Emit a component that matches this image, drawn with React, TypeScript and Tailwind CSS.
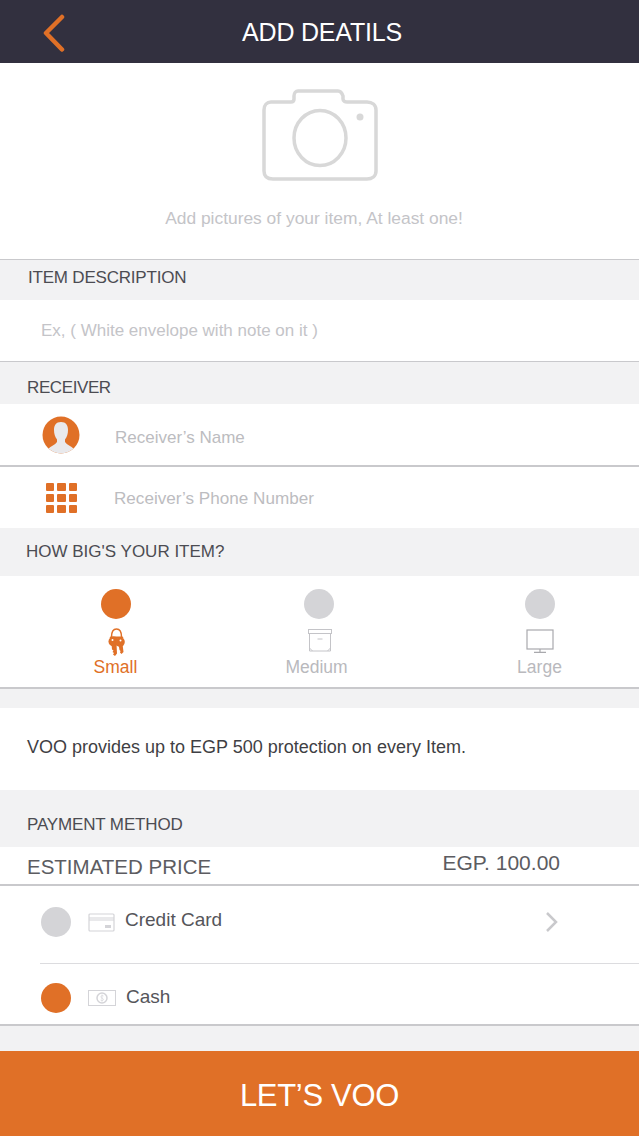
import React from 'react';

const font = { fontFamily: '"Liberation Sans", Arial, sans-serif' };

const SectionLabel = ({ text, className }: { text: string; className: string }) => (
  <div className={`flex items-center bg-[#f2f2f3] text-[17px] text-[#4c4c52] ${className}`}>{text}</div>
);

const Dot = ({ on, className = '' }: { on: boolean; className?: string }) => (
  <span className={`block h-[30px] w-[30px] shrink-0 rounded-full ${on ? 'bg-[#e07027]' : 'bg-[#d4d4d7]'} ${className}`} />
);

const CameraIcon = () => (
  <svg width="116" height="92" viewBox="0 0 116 92" fill="none" stroke="#d8d8d8" strokeWidth="3.5">
    <path d="M9 13H29C31 13 32 12 32 10V7C32 4 34 2 36 2H76C79 2 80 4 81 7V10C81 12 83 13 85 13H105C110 13 114 16 114 21V82C114 87 110 90 105 90H11C5 90 2 87 2 82V21C2 16 5 13 9 13Z" />
    <ellipse cx="58" cy="49" rx="26" ry="27.5" />
    <circle cx="98" cy="28" r="3.5" fill="#d8d8d8" stroke="none" />
  </svg>
);

const PersonIcon = () => (
  <svg width="38" height="38" viewBox="0 0 38 38">
    <defs>
      <clipPath id="avatar">
        <circle cx="19" cy="19" r="18.5" />
      </clipPath>
    </defs>
    <circle cx="19" cy="19" r="18.5" fill="#e07027" />
    <path
      clipPath="url(#avatar)"
      d="M19 6C14 6 12 9.500 12 14C12 18 13 21 15 23.500V26C13 29 9 30 6 33V38H32V33C29 30 25 29 23 26V23.500C25 21 26 18 26 14C26 9.500 24 6 19 6Z"
      fill="#e9e9ec"
    />
  </svg>
);

const KeypadIcon = () => (
  <div className="grid w-[31px] grid-cols-3 gap-[3px]">
    {Array.from({ length: 9 }).map((_, i) => (
      <span key={i} className="block h-[8px] rounded-[1px] bg-[#e07027]" />
    ))}
  </div>
);

const KeysIcon = () => (
  <svg width="17" height="28" viewBox="0 0 17 28" fill="#e07027">
    <path d="M3.500 9C3.500 4 5.500 1 8.500 1C11.500 1 13.500 4 13.500 9" fill="none" stroke="#e07027" strokeWidth="1.500" />
    <path d="M2.500 8.500H14.500L15.500 10H1.500Z" />
    <circle cx="5.500" cy="13.500" r="5" />
    <circle cx="12" cy="14" r="4.800" />
    <path d="M3.500 16H8.500L9 25.500L7 28L5 26.500L6 25L4.500 24L5.500 22.500L4 21.500Z" />
    <path d="M10.500 16H14.500L15.500 24L13.500 26L12 24.500L12.500 23L11.500 22Z" />
    <circle cx="4.500" cy="12" r="1" fill="#fff" />
    <circle cx="12.500" cy="12.500" r="1" fill="#fff" />
  </svg>
);

const BoxIcon = () => (
  <svg width="24" height="23" viewBox="0 0 24 23" fill="none" stroke="#c4c4c8" strokeWidth="1">
    <rect x="0.500" y="0.500" width="23" height="4" />
    <path d="M1.500 4.500V22H22.500V4.500" />
    <path d="M9.500 10H14.500" />
    <path d="M1.500 19L4.500 22M22.500 19L19.500 22" />
  </svg>
);

const MonitorIcon = () => (
  <svg width="28" height="24" viewBox="0 0 28 24" fill="none" stroke="#a9a9ad" strokeWidth="1.200">
    <rect x="1" y="1" width="26" height="19" />
    <path d="M14 20V23M8 23.400H20" />
  </svg>
);

const CardIcon = () => (
  <svg width="27" height="19" viewBox="0 0 27 19" fill="none" stroke="#d4d4d8" strokeWidth="1.200">
    <rect x="1" y="1" width="25" height="17" rx="1" />
    <path d="M1 5H26M1 7H26" />
    <rect x="17" y="12" width="6" height="3" fill="#d4d4d8" stroke="none" />
  </svg>
);

const CashIcon = () => (
  <svg width="28" height="16" viewBox="0 0 28 16" fill="none" stroke="#d4d4d8" strokeWidth="1">
    <rect x="0.500" y="0.500" width="27" height="15" />
    <circle cx="14" cy="8" r="5" strokeWidth="1.500" />
    <path d="M15.500 6C14 5 12.500 6 13 7.500C13.500 8.500 15.500 8 15.500 9.800C15 11 13 11 12.500 10M14 4.500V11.500" strokeWidth="0.700" />
  </svg>
);

const SizeOption = ({
  label,
  on,
  icon,
  className,
  dotClass,
  iconClass,
}: {
  label: string;
  on: boolean;
  icon: React.ReactNode;
  className: string;
  dotClass?: string;
  iconClass: string;
}) => (
  <div className={`flex flex-col items-center ${className}`}>
    <Dot on={on} className={dotClass} />
    <div className={`flex h-[37px] items-end ${iconClass}`}>{icon}</div>
    <span className={`mt-[1px] text-[17.5px] leading-[20px] ${on ? 'text-[#e07027]' : 'text-[#b9b9bd]'}`}>{label}</span>
  </div>
);

export default function App() {
  return (
    <div style={font} className="flex h-[1136px] w-[639px] flex-col overflow-hidden bg-white">
      <header className="relative flex h-[63px] shrink-0 items-center justify-center bg-[#32303f] pl-[5px] pt-[2px]">
        <svg className="absolute left-[42px] top-[14px]" width="24" height="38" viewBox="0 0 24 38" fill="none" stroke="#e07027" strokeWidth="4.500" strokeLinecap="round" strokeLinejoin="round">
          <path d="M20 3L4 19L20 35.500" />
        </svg>
        <h1 className="text-[25px] font-normal tracking-[-0.2px] text-white">ADD DEATILS</h1>
      </header>

      <section className="flex h-[197px] shrink-0 flex-col items-center border-b border-[#c9c9cc] pt-[26px]">
        <div className="ml-[1px]"><CameraIcon /></div>
        <p className="mr-[11px] mt-[27px] text-[17.4px] leading-[20px] text-[#c4c4c8]">Add pictures of your item, At least one!</p>
      </section>

      <SectionLabel text="ITEM DESCRIPTION" className="h-[40px] shrink-0 pb-[5px] pl-[28px] tracking-[-0.2px]" />
      <div className="flex h-[62px] shrink-0 items-center border-b border-[#c9c9cc] pl-[41px] text-[17px] text-[#c4c4c8]">
        Ex, ( White envelope with note on it )
      </div>

      <SectionLabel text="RECEIVER" className="h-[42px] shrink-0 pl-[27px] pt-[10px] tracking-[-0.4px]" />
      <div className="flex h-[63px] shrink-0 items-center border-b-2 border-[#c9c9cc] pl-[42px]">
        <PersonIcon />
        <span className="ml-[35px] mt-[7px] text-[17px] text-[#bcbcc0]">Receiver’s Name</span>
      </div>
      <div className="flex h-[61px] shrink-0 items-center pl-[46px]">
        <KeypadIcon />
        <span className="ml-[37px] mt-[2px] text-[17.1px] text-[#bcbcc0]">Receiver’s Phone Number</span>
      </div>

      <SectionLabel text="HOW BIG'S YOUR ITEM?" className="h-[48px] shrink-0 pl-[26px]" />
      <div className="h-[113px] shrink-0 border-b-2 border-[#c9c9cc] pt-[13px]">
        <div className="flex">
          <SizeOption label="Small" on icon={<KeysIcon />} className="ml-[74px] w-[83px]" iconClass="ml-[1px]" />
          <SizeOption label="Medium" on={false} icon={<BoxIcon />} className="ml-[118px] w-[83px]" dotClass="ml-[4px]" iconClass="ml-[7px] pb-[4px]" />
          <SizeOption label="Large" on={false} icon={<MonitorIcon />} className="ml-[140px] w-[83px]" iconClass="pb-[3px]" />
        </div>
      </div>

      <div className="h-[19px] shrink-0 bg-[#f2f2f3]" />
      <div className="flex h-[82px] shrink-0 items-center pb-[4px] pl-[27px] text-[18px] text-[#3f3f44]">
        VOO provides up to EGP 500 protection on every Item.
      </div>

      <SectionLabel text="PAYMENT METHOD" className="h-[57px] shrink-0 pl-[27px] pt-[12px] tracking-[-0.15px]" />
      <div className="flex h-[39px] shrink-0 justify-between border-b-2 border-[#c9c9cc] pl-[27px] pr-[79px] text-[#5c5c61]">
        <span className="mt-[6px] text-[20.5px] leading-[28px]">ESTIMATED PRICE</span>
        <span className="mt-[2px] text-[21px] leading-[28px]">EGP. 100.00</span>
      </div>

      <div className="flex h-[77px] shrink-0 items-center pb-[5px] pl-[41px]">
        <Dot on={false} />
        <span className="ml-[17px]"><CardIcon /></span>
        <span className="mb-[3px] ml-[10px] text-[19px] text-[#55555a]">Credit Card</span>
        <svg className="ml-[323px]" width="14" height="22" viewBox="0 0 14 22" fill="none" stroke="#c9c9cc" strokeWidth="2.500">
          <path d="M2 2L11 11L2 20" />
        </svg>
      </div>
      <div className="ml-[40px] h-px shrink-0 bg-[#dcdcdf]" />
      <div className="flex h-[62px] shrink-0 items-center border-b-2 border-[#c9c9cc] pl-[41px] pt-[7px]">
        <Dot on />
        <span className="ml-[17px]"><CashIcon /></span>
        <span className="ml-[10px] text-[19px] text-[#55555a]">Cash</span>
      </div>

      <div className="h-[25px] shrink-0 bg-[#f2f2f3]" />
      <button className="flex h-[85px] shrink-0 items-center justify-center bg-[#e07027] pt-[5px] text-[31px] tracking-[-0.3px] text-white">
        LET’S VOO
      </button>
    </div>
  );
}
